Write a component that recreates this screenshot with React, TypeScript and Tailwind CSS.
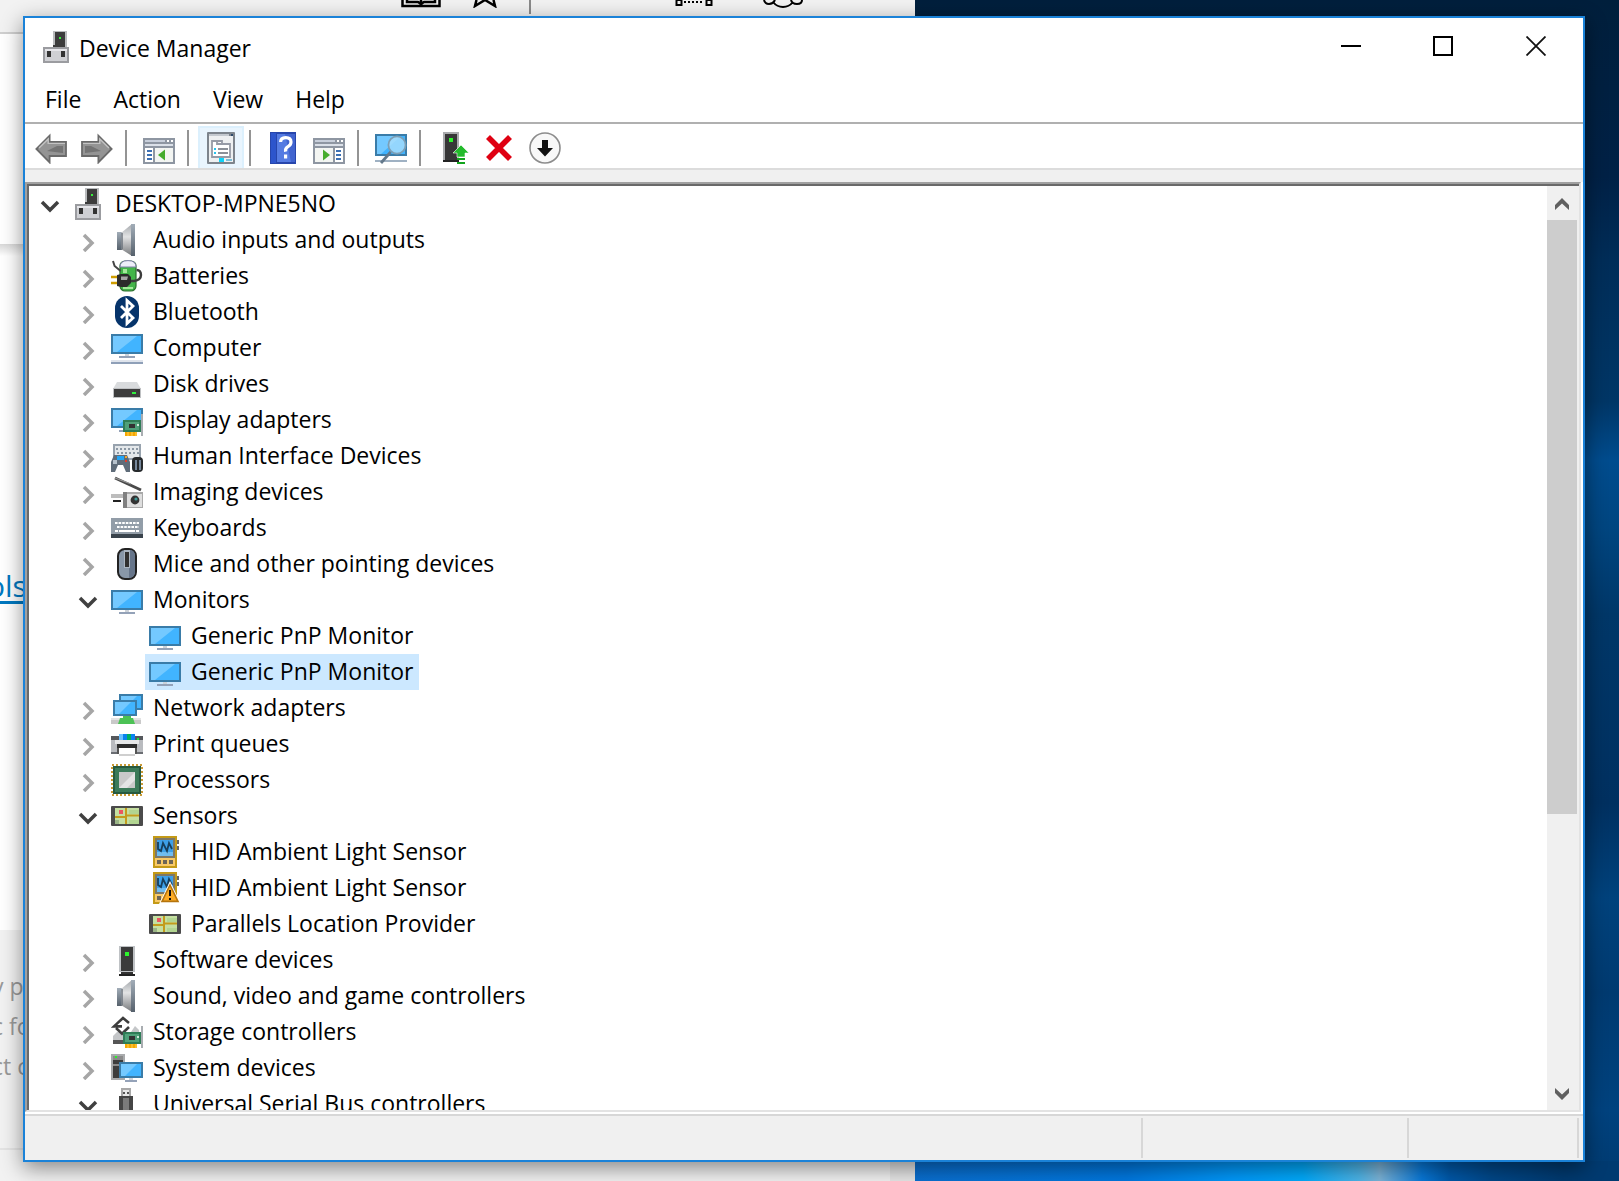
import React, { useState } from 'react';

type IconProps = { children: React.ReactNode };

const Icon: React.FC<IconProps> = ({ children }) => (
  <svg viewBox="0 0 16 16" className="w-8 h-8 shrink-0" aria-hidden="true">
    {children}
  </svg>
);

type ScreenProps = { x: number; y: number; w: number; h: number };

const Screen: React.FC<ScreenProps> = ({ x, y, w, h }) => (
  <>
    <rect x={x} y={y} width={w} height={h} fill="#3a7ca8" />
    <rect x={x + 1} y={y + 1} width={w - 2} height={h - 2} fill="#41b4ff" />
    <path d={`M${x + 1} ${y + 1}h${w - 4}l${-(w - 6)} ${h - 2}h-2z`} fill="#74c9ff" />
  </>
);

const GreenCard = () => (
  <>
    <rect x="15" y="5" width="1" height="11" fill="#a9adb1" />
    <rect x="6" y="8" width="9" height="6" fill="#2f7d57" />
    <rect x="7" y="9" width="7" height="4" fill="#4fa079" />
    <rect x="9" y="10" width="3" height="2" fill="#333" />
    <rect x="13" y="10" width="1" height="1" fill="#cfe8da" />
    <rect x="7" y="14" width="6" height="2" fill="#f5a800" />
    <path d="M8.5 14v2M10.5 14v2M12.5 14v2" stroke="#ffd25c" strokeWidth="0.5" />
  </>
);

const PcIcon = () => (
  <Icon>
    <path d="M6 0h7v8H6z" fill="#b9bbbd" />
    <path d="M7 .5h5V8H6V7h1z" fill="#3c3c3c" />
    <rect x="9" y="3" width="1" height="1" fill="#36f03a" />
    <rect x="1" y="8" width="13" height="8" fill="#9b9ca0" />
    <rect x="2" y="9" width="11" height="6" fill="#cfd0d4" />
    <rect x="2" y="9" width="11" height="1" fill="#e6e6ea" />
    <rect x="3" y="10" width="2" height="3" fill="#333" />
    <rect x="10" y="10" width="2" height="3" fill="#333" />
  </Icon>
);

const SpeakerIcon = () => (
  <Icon>
    <defs>
      <linearGradient id="cone" x1="0" x2="0" y1="0" y2="1">
        <stop offset="0" stopColor="#a4a8ac" />
        <stop offset="0.4" stopColor="#e2e3e4" />
        <stop offset="1" stopColor="#77797c" />
      </linearGradient>
      <linearGradient id="rim" x1="0" x2="0" y1="0" y2="1">
        <stop offset="0" stopColor="#a2adb8" />
        <stop offset="1" stopColor="#56616c" />
      </linearGradient>
    </defs>
    <rect x="3" y="4" width="3" height="9" fill="url(#rim)" />
    <path d="M5 4.500L10.500 0v16L5 12.500z" fill="url(#cone)" />
    <path d="M5.500 4.500v8" stroke="#656e78" strokeWidth="0.700" />
    <rect x="10" y="0" width="2" height="16" fill="url(#rim)" />
  </Icon>
);

const BatteryIcon = () => (
  <Icon>
    <rect x="4.500" y="0.500" width="8" height="15" rx="2.500" fill="#43b549" stroke="#2b6e2d" strokeWidth="0.6" />
    <path d="M4.500 3.500Q4.500.3 8.500.3t4 3.200z" fill="#eeeef8" stroke="#8080a8" strokeWidth="0.5" />
    <path d="M6 4.500h2v2H6zM6 13.500h5v1H6z" fill="#a5e89c" />
    <path d="M1 .5l.8 2.500 3 2.500" fill="none" stroke="#444" strokeWidth="1" />
    <path d="M9.500 10.500h2q3.500-.5 3.500-3T12.800 5" fill="none" stroke="#3c3c3c" strokeWidth="1.200" />
    <path d="M0 8.500h3M0 11.500h3" stroke="#cf9d00" strokeWidth="1.200" />
    <path d="M3 7.500L5 7h3.500L10 8.500v3L8 13.500H5L3 13z" fill="#2b2b2b" />
    <path d="M5 8.200h3.500L8 10H5z" fill="#a5a5a5" />
  </Icon>
);

const BluetoothIcon = () => (
  <Icon>
    <rect x="2" y="0" width="12" height="16" rx="6" fill="#06346b" />
    <path d="M5 5l6 6-3 2.800V2.200L11 5l-6 6" fill="none" stroke="#fff" strokeWidth="1.400" />
  </Icon>
);

const ComputerIcon = () => (
  <Icon>
    <Screen x={0} y={1} w={16} h={10} />
    <rect x="7" y="11" width="2" height="1" fill="#cdd3da" />
    <rect x="4" y="12" width="8" height="1" fill="#94a2b8" />
    <rect x="0" y="14" width="16" height="1" fill="#dfe4ec" />
    <rect x="0" y="15" width="16" height="1" fill="#8fa0b8" />
  </Icon>
);

const DiskIcon = () => (
  <Icon>
    <path d="M3 7h10l2 3.500H1z" fill="#d9dbdd" />
    <rect x="1" y="10" width="14" height="5" fill="#bfc1c3" />
    <rect x="1.500" y="10.500" width="13" height="4" fill="#3d3d3d" />
    <rect x="10.500" y="12" width="2" height="1" fill="#30f040" />
  </Icon>
);

const DisplayIcon = () => (
  <Icon>
    <Screen x={0} y={2} w={16} h={10} />
    <rect x="4" y="13" width="4" height="1" fill="#94a2b8" />
    <GreenCard />
  </Icon>
);

const HidIcon = () => (
  <Icon>
    <rect x="1" y="2" width="14" height="8" fill="#98a3ae" />
    <rect x="2" y="3" width="12" height="6" fill="#e3e7ea" />
    <path d="M2.500 4.500h11M3 6.500h11" stroke="#8c98a4" strokeWidth="1" strokeDasharray="1 1" />
    <path d="M0 16v-5l1.500-3.500h6.500l1.500 3.500v5H7.500L6 12.500H3.500L2 16z" fill="#5f6c79" />
    <path d="M3 8h3.500v2H3z" fill="#23a4f5" />
    <rect x="7" y="8" width="1" height="1" fill="#f5a62a" />
    <rect x="7" y="10" width="1" height="1" fill="#e33c2c" />
    <rect x="1" y="10" width="2" height="2" fill="#b7c2cc" />
    <rect x="10.500" y="8.500" width="5.500" height="7.500" rx="2" fill="#26292c" />
    <path d="M12 10h1v5h-1zM14 10h1v5h-1z" fill="#76879b" />
  </Icon>
);

const CameraIcon = () => (
  <Icon>
    <path d="M2 1l13 6" stroke="#4a4a4a" strokeWidth="1.500" />
    <path d="M2 1l8 3" stroke="#999" strokeWidth="0.6" />
    <rect x="0" y="9" width="6" height="2" fill="#bdbdbd" />
    <rect x="1" y="12" width="4" height="1" fill="#222" />
    <rect x="6" y="8" width="10" height="8" fill="#a9a9a9" />
    <rect x="8" y="9" width="7.500" height="6.500" fill="#dedede" />
    <rect x="6" y="8" width="2" height="8" fill="#808080" />
    <circle cx="12" cy="12" r="2.200" fill="#333" />
    <circle cx="12.500" cy="11.500" r="0.800" fill="#3f9a98" />
  </Icon>
);

const KeyboardIcon = () => (
  <Icon>
    <rect x="0" y="3" width="16" height="8" fill="#929da8" />
    <path d="M2 5.500h12M3 7.500h11" stroke="#fff" strokeWidth="1" strokeDasharray="1.300 .5" />
    <path d="M2 9.500h1.500M4 9.500h8M12.500 9.500H14" stroke="#fff" strokeWidth="1" />
    <rect x="0" y="11" width="16" height="2" fill="#39434c" />
  </Icon>
);

const MouseIcon = () => (
  <Icon>
    <rect x="3.500" y="0.500" width="9" height="15" rx="3.500" fill="#8897a8" stroke="#222" strokeWidth="1" />
    <path d="M9 1h1q2 .5 2 3v8q0 2.500-3 3z" fill="#66758a" />
    <path d="M8 1v9" stroke="#aab5c1" strokeWidth="3" />
    <rect x="7" y="2" width="2" height="7.500" fill="#303030" />
  </Icon>
);

const MonitorIcon = () => (
  <Icon>
    <Screen x={0} y={3} w={16} h={10} />
    <rect x="7" y="13" width="2" height="1" fill="#cdd3da" />
    <rect x="4" y="14" width="8" height="1" fill="#94a2b8" />
  </Icon>
);

const NetworkIcon = () => (
  <Icon>
    <Screen x={4} y={1} w={12} h={8} />
    <Screen x={1} y={4} w={12} h={8} />
    <rect x="0" y="13" width="15" height="3" fill="#c9c9c9" />
    <rect x="0" y="13" width="15" height="1" fill="#e4e4e4" />
    <path d="M6 12h4v1h1l1 3H3.500l1-3H6z" fill="#4cc255" />
  </Icon>
);

const PrinterIcon = () => (
  <Icon>
    <rect x="0" y="4" width="16" height="3" fill="#55585c" />
    <rect x="0" y="6" width="16" height="7" fill="#b9bbbf" />
    <rect x="0" y="12" width="16" height="1" fill="#6a6d72" />
    <rect x="4" y="3" width="8" height="3" fill="#0b83f0" />
    <rect x="4" y="3" width="2" height="3" fill="#6cc0ff" />
    <rect x="8" y="3" width="2" height="3" fill="#00b062" />
    <rect x="13" y="5" width="1" height="1" fill="#1fe03b" />
    <rect x="2" y="6" width="12" height="2" fill="#e6e7e8" />
    <rect x="3" y="8" width="10" height="2" fill="#2d2d2d" />
    <rect x="3" y="10" width="1" height="3" fill="#555" />
    <rect x="12" y="10" width="1" height="3" fill="#555" />
    <rect x="4" y="10" width="8" height="4" fill="#fff" />
    <rect x="4" y="13" width="8" height="1" fill="#cfcfcf" />
  </Icon>
);

const CpuIcon = () => (
  <Icon>
    <rect x="0.500" y="0.500" width="15" height="15" fill="none" stroke="#c99a35" strokeWidth="1" strokeDasharray="1 1" />
    <rect x="1" y="1" width="14" height="14" fill="#275a40" />
    <rect x="2" y="2" width="12" height="12" fill="#3b7a58" />
    <rect x="4" y="4" width="8" height="8" fill="#c9c9c9" />
    <path d="M4 12L12 4v4l-4 4z" fill="#e4e4e4" />
  </Icon>
);

const MapIcon = () => (
  <Icon>
    <rect x="0" y="3" width="16" height="10" rx="0.500" fill="#4b4b4b" />
    <rect x="2" y="4" width="12" height="8" fill="#c5dfa0" />
    <path d="M9 5h5v2H9zM9 10h5v2H9z" fill="#b2d591" />
    <path d="M2 8.500h5l1-.8h6M7.500 4v8" fill="none" stroke="#c39c1c" strokeWidth="1" />
    <rect x="4" y="5" width="2" height="2" fill="#ec5560" />
    <rect x="2" y="10" width="2" height="2" fill="#9bb587" />
  </Icon>
);

const SensorIcon: React.FC<{ warning?: boolean }> = ({ warning }) => (
  <Icon>
    <rect x="2" y="0" width="12" height="16" fill="#c49a17" />
    <rect x="3" y="1" width="10" height="10" fill="#7c7868" />
    <rect x="4" y="2" width="8" height="8" fill="#3da0e8" />
    <rect x="4" y="8" width="8" height="2" fill="#70bdf0" />
    <path d="M4.500 3v3.500L6 7.500l1-4 2 4 1-4 1.500 3" fill="none" stroke="#173f5c" strokeWidth="0.900" />
    <rect x="3" y="11" width="10" height="4" fill="#f8c967" />
    <path d="M4 12h2v2H4zM7 12h2v2H7zM10 12h2v2h-2z" fill="#6d6656" />
    <path d="M14 2h1v2h-1zM14 5h1v2h-1z" fill="#666" />
    {warning && (
      <>
        <path d="M10.500 4.500L16 16H5z" fill="#fff" />
        <path d="M10.500 6.500l4 8.200h-8z" fill="#fbab25" stroke="#b5740c" strokeWidth="0.800" />
        <path d="M10.500 9v3M10.500 13v1" stroke="#111" strokeWidth="1" />
      </>
    )}
  </Icon>
);

const TowerIcon = () => (
  <Icon>
    <rect x="4" y="1" width="8" height="13" fill="#bfc2c5" />
    <rect x="5" y="1.500" width="6" height="12" fill="#3b3b3b" />
    <rect x="7" y="4" width="2" height="2" fill="#2cf42c" />
    <rect x="5" y="14" width="6" height="1" fill="#333" />
    <rect x="4" y="15" width="8" height="1" fill="#222" />
  </Icon>
);

const StorageIcon = () => (
  <Icon>
    <path d="M1 10l2-2h7l2-3 2 2v7H1z" fill="#c4c6c8" />
    <rect x="1" y="12" width="6" height="2" fill="#555" />
    <path d="M9 3.500L6 1 1.500 5.200h4M2.500 6l3 2.800L9 5.500" fill="none" stroke="#3d3d3d" strokeWidth="1.300" />
    <GreenCard />
  </Icon>
);

const SystemIcon = () => (
  <Icon>
    <rect x="0" y="1" width="7" height="13" fill="#a9abad" />
    <rect x="1" y="2" width="5" height="11" fill="#3d3d3d" />
    <path d="M1 2h5v2H1zM1 6h3v1H1z" fill="#8b8b8b" />
    <rect x="2" y="2" width="1" height="1" fill="#2cf42c" />
    <Screen x={4} y={5} w={12} h={8} />
    <rect x="9" y="13" width="2" height="1" fill="#cdd3da" />
    <rect x="7" y="14" width="6" height="1" fill="#94a2b8" />
  </Icon>
);

const UsbIcon = () => (
  <Icon>
    <rect x="5" y="0" width="5" height="4" fill="#a8a8a8" />
    <rect x="6" y="1" width="3" height="3" fill="#e8e8e8" />
    <path d="M6 2h1v1H6zM8 2h1v1H8z" fill="#555" />
    <path d="M4 4h7v9l-2 2H6l-2-2z" fill="#454545" />
    <rect x="6" y="5" width="3" height="6" fill="#7b7b7b" />
  </Icon>
);

const ArrowIcon: React.FC<{ flip?: boolean }> = ({ flip }) => (
  <Icon>
    <g transform={flip ? 'matrix(-1 0 0 1 16 0)' : undefined}>
      <path d="M.7 8.500L7.300 1.800V5h8.200v7H7.300v3.200z" fill="#949494" stroke="#6a6a6a" strokeWidth="0.900" />
      <path d="M2 8l4.600-4.500v2.200H15" fill="none" stroke="#c3c3c3" strokeWidth="0.700" />
      <path d="M6 9.500l5-2.500h3v3.500z" fill="#747474" />
    </g>
  </Icon>
);

const PaneIcon: React.FC<{ flip?: boolean }> = ({ flip }) => (
  <Icon>
    <rect x="0" y="3" width="16" height="13" fill="#8e96a2" />
    <rect x="1" y="4" width="10" height="1" fill="#c8cfdb" />
    <path d="M12 4h1v1h-1zM14 4h1v1h-1z" fill="#fff" />
    <rect x="1" y="6" width="14" height="1" fill="#dbe0e8" />
    <g transform={flip ? 'matrix(-1 0 0 1 16 0)' : undefined}>
      <rect x="1" y="8" width="4" height="7" fill="#fff" />
      <rect x="6" y="8" width="9" height="7" fill="#f3f5f2" />
      <path d="M2 9.500h2.500M2 11.500h2.500M2 13.500h2.500" stroke="#3c70b4" strokeWidth="1" />
      <path d="M11 8.700v5.600L7.500 11.500z" fill="#46ac2d" />
    </g>
  </Icon>
);

const PropertiesIcon = () => (
  <Icon>
    <rect x="1" y="0" width="14" height="16" rx="0.500" fill="#7d848c" />
    <rect x="2" y="2" width="12" height="13" fill="#eef0f1" />
    <rect x="2" y="1" width="10" height="1" fill="#c4c9cf" />
    <rect x="13" y="1" width="1" height="1" fill="#2d4a6c" />
    <path d="M3.500 4.500h5v1.500h4v6.500h-9zM6 4.500V6h2.500" fill="#fff" stroke="#969ba6" strokeWidth="0.900" />
    <path d="M4.500 8.500h1M4.500 10.500h1" stroke="#27c4ee" strokeWidth="1" />
    <path d="M6.500 8.500h5M6.500 10.500h5" stroke="#8b9098" strokeWidth="0.900" />
    <path d="M7 13h2.500v2H7z" fill="#0fd3f8" />
    <path d="M10.500 14h3" stroke="#7bbdd8" strokeWidth="1" />
  </Icon>
);

const HelpIcon = () => (
  <Icon>
    <rect x="1.500" y="0" width="13" height="16" fill="#2746ac" />
    <rect x="2" y="0.500" width="2.500" height="15" fill="#2d55cc" />
    <rect x="5" y="1" width="9" height="14" fill="#557be2" />
    <path d="M9 1h5v14h-2z" fill="#4164cf" />
    <path d="M6.800 5q0-2.200 2.600-2.200T12 5q0 1.500-1.500 2.300t-1.200 2.500M9.300 11.200v2" fill="none" stroke="#fff" strokeWidth="1.600" />
  </Icon>
);

const ScanIcon = () => (
  <Icon>
    <Screen x={0} y={1} w={16} h={11} />
    <rect x="0" y="14" width="16" height="1" fill="#9fb1c3" />
    <circle cx="11" cy="6.500" r="4.300" fill="#a9defc" fillOpacity="0.800" stroke="#7c9fb6" strokeWidth="0.900" />
    <path d="M7.800 10L3 15.500" stroke="#64798b" strokeWidth="1.400" />
  </Icon>
);

const UpdateIcon = () => (
  <Icon>
    <rect x="3" y="0" width="8" height="14" fill="#a9abad" />
    <rect x="4" y="1" width="6" height="13" fill="#373737" />
    <rect x="6" y="3" width="2" height="2" fill="#2cf42c" />
    <rect x="3" y="14" width="8" height="1" fill="#222" />
    <path d="M12 6.500l4 4h-2v2h-4v-2H8z" fill="#23bb2c" stroke="#fff" strokeWidth="0.300" />
    <path d="M10 13.500h4M10 15.500h4" stroke="#12a41d" strokeWidth="1" />
  </Icon>
);

const UninstallIcon = () => (
  <Icon>
    <path d="M2.500 2.500l11 11M13.500 2.500l-11 11" stroke="#df0012" strokeWidth="2.800" />
  </Icon>
);

const DisableIcon = () => (
  <Icon>
    <circle cx="8" cy="8" r="7.500" fill="#f8f8f8" stroke="#8c8c8c" strokeWidth="0.800" />
    <path d="M6.500 4h3v4h2.500l-4 4.300L4 8h2.500z" fill="#111" />
  </Icon>
);

type Row = {
  label: string;
  icon: React.FC;
  level: number;
  state?: 'open' | 'closed';
};

const WarningSensorIcon = () => <SensorIcon warning />;

const rows: Row[] = [
  { label: 'DESKTOP-MPNE5NO', icon: PcIcon, level: 0, state: 'open' },
  { label: 'Audio inputs and outputs', icon: SpeakerIcon, level: 1, state: 'closed' },
  { label: 'Batteries', icon: BatteryIcon, level: 1, state: 'closed' },
  { label: 'Bluetooth', icon: BluetoothIcon, level: 1, state: 'closed' },
  { label: 'Computer', icon: ComputerIcon, level: 1, state: 'closed' },
  { label: 'Disk drives', icon: DiskIcon, level: 1, state: 'closed' },
  { label: 'Display adapters', icon: DisplayIcon, level: 1, state: 'closed' },
  { label: 'Human Interface Devices', icon: HidIcon, level: 1, state: 'closed' },
  { label: 'Imaging devices', icon: CameraIcon, level: 1, state: 'closed' },
  { label: 'Keyboards', icon: KeyboardIcon, level: 1, state: 'closed' },
  { label: 'Mice and other pointing devices', icon: MouseIcon, level: 1, state: 'closed' },
  { label: 'Monitors', icon: MonitorIcon, level: 1, state: 'open' },
  { label: 'Generic PnP Monitor', icon: MonitorIcon, level: 2 },
  { label: 'Generic PnP Monitor', icon: MonitorIcon, level: 2 },
  { label: 'Network adapters', icon: NetworkIcon, level: 1, state: 'closed' },
  { label: 'Print queues', icon: PrinterIcon, level: 1, state: 'closed' },
  { label: 'Processors', icon: CpuIcon, level: 1, state: 'closed' },
  { label: 'Sensors', icon: MapIcon, level: 1, state: 'open' },
  { label: 'HID Ambient Light Sensor', icon: SensorIcon, level: 2 },
  { label: 'HID Ambient Light Sensor', icon: WarningSensorIcon, level: 2 },
  { label: 'Parallels Location Provider', icon: MapIcon, level: 2 },
  { label: 'Software devices', icon: TowerIcon, level: 1, state: 'closed' },
  { label: 'Sound, video and game controllers', icon: SpeakerIcon, level: 1, state: 'closed' },
  { label: 'Storage controllers', icon: StorageIcon, level: 1, state: 'closed' },
  { label: 'System devices', icon: SystemIcon, level: 1, state: 'closed' },
  { label: 'Universal Serial Bus controllers', icon: UsbIcon, level: 1, state: 'open' },
];

const indents = ['pl-[6px]', 'pl-[44px]', 'pl-[82px]'];

const toolGroups: { label: string; icon: React.ReactNode; active?: boolean }[][] = [
  [
    { label: 'Back', icon: <ArrowIcon /> },
    { label: 'Forward', icon: <ArrowIcon flip /> },
  ],
  [{ label: 'Show/Hide Console Tree', icon: <PaneIcon /> }],
  [{ label: 'Properties', icon: <PropertiesIcon />, active: true }],
  [
    { label: 'Help', icon: <HelpIcon /> },
    { label: 'Show/Hide Action Pane', icon: <PaneIcon flip /> },
  ],
  [{ label: 'Scan for hardware changes', icon: <ScanIcon /> }],
  [
    { label: 'Update driver', icon: <UpdateIcon /> },
    { label: 'Uninstall', icon: <UninstallIcon /> },
    { label: 'Disable', icon: <DisableIcon /> },
  ],
];

const Expander: React.FC<{ state?: 'open' | 'closed' }> = ({ state }) => {
  if (!state) return <span className="w-[30px] mr-1 shrink-0" />;
  return (
    <button aria-label={state === 'open' ? 'Collapse' : 'Expand'} className="w-[30px] h-9 pt-1 mr-1 shrink-0 flex items-center justify-center">
      <svg viewBox="0 0 20 20" className="w-5 h-5">
        {state === 'open' ? (
          <path d="M2 6l8 8 8-8" fill="none" stroke="#404040" strokeWidth="3.500" />
        ) : (
          <path d="M6 3l8 8-8 8" fill="none" stroke="#a6a6a6" strokeWidth="3.500" />
        )}
      </svg>
    </button>
  );
};

const DeviceTree: React.FC = () => {
  const [selected, setSelected] = useState(13);

  return (
    <ul role="tree" className="flex-1 min-w-0 overflow-hidden bg-white">
      {rows.map((row, i) => (
        <li key={i} role="treeitem" aria-selected={i === selected} className={`flex items-center h-9 ${indents[row.level]}`}>
          <Expander state={row.state} />
          <button
            onClick={() => setSelected(i)}
            className={`flex items-center gap-[10px] h-9 pl-1 pr-[6px] text-[23px] leading-8 whitespace-nowrap ${i === selected ? 'bg-[#cce8ff]' : ''}`}
          >
            <row.icon />
            <span className="pb-[2px]">{row.label}</span>
          </button>
        </li>
      ))}
    </ul>
  );
};

const ScrollBar: React.FC = () => (
  <div className="w-8 shrink-0 flex flex-col bg-[#f0f0f0]">
    <button aria-label="Scroll up" className="h-[34px] w-[30px] pt-[2px] flex items-center justify-center">
      <svg viewBox="0 0 14 12" className="w-[14px] h-3">
        <path d="M0 12V7l7-7 7 7v5L7 5.500z" fill="#606060" />
      </svg>
    </button>
    <div className="w-[30px] flex-[594] bg-[#cdcdcd]" />
    <div className="flex-[262]" />
    <button aria-label="Scroll down" className="h-[34px] w-[30px] pt-[2px] flex items-center justify-center">
      <svg viewBox="0 0 14 12" className="w-[14px] h-3">
        <path d="M0 0v5l7 7 7-7V0L7 6.500z" fill="#606060" />
      </svg>
    </button>
  </div>
);

const BrowserWindow: React.FC = () => (
  <div className="absolute inset-y-0 left-0 w-[915px] flex flex-col overflow-hidden bg-white">
    <div className="h-[34px] shrink-0 flex items-start pl-[401px] bg-[#f2f2f2] border-b-2 border-[#cfcfcf]">
      <svg viewBox="0 0 40 8" className="w-10 h-2">
        <path d="M1.500 0v6h37V0M6 0v2h11l3 2 3-2h11V0M20 0v4" fill="none" stroke="#000" strokeWidth="2.500" />
      </svg>
      <svg viewBox="0 0 24 8" className="w-6 h-2 ml-8">
        <path d="M3.500 0L2 6l10-6 10 6-1.500-6" fill="none" stroke="#000" strokeWidth="2.500" />
      </svg>
      <div className="w-[2px] h-[14px] ml-8 bg-[#8a8a8a]" />
      <svg viewBox="0 0 38 8" className="w-[38px] h-2 ml-36">
        <path d="M1.500 0h5v5h-5zM31.500 0h5v5h-5z" fill="none" stroke="#000" strokeWidth="2" />
        <path d="M9 2h20" stroke="#000" strokeWidth="2" strokeDasharray="2 2" />
      </svg>
      <svg viewBox="0 0 40 8" className="w-10 h-2 ml-[50px]">
        <path d="M1 0q1 4 5 4t6-4M28 0q1 4 6 4t5-4M10 2q4 5 10 5t10-5" fill="none" stroke="#000" strokeWidth="2" />
      </svg>
    </div>
    <div className="h-[210px] shrink-0" />
    <div className="h-3 shrink-0 bg-linear-to-b from-[#d8d8d8] to-white" />
    <div className="flex-1 flex flex-col justify-center pb-[14px]">
      <a href="#tools" className="-ml-[13px] text-[30px] leading-10 text-[#0078c0] underline underline-offset-4">
        ols
      </a>
    </div>
    <div className="h-[251px] shrink-0 pt-9 bg-[#f2f2f2] text-[23px] leading-10 text-[#999] whitespace-nowrap">
      <p className="-ml-2">y p</p>
      <p className="-ml-2">c fo</p>
      <p className="-ml-2">ct c</p>
      <div className="mt-[62px] border-t-2 border-[#e4e4e4]" />
      <div className="h-8 w-[25px] ml-auto bg-[#e6e6e6]" />
    </div>
  </div>
);

const TitleBar: React.FC = () => (
  <header className="h-[60px] shrink-0 flex items-start justify-between">
    <div className="flex items-center gap-[6px] h-[58px] pl-4">
      <PcIcon />
      <h1 className="text-[23px] leading-8 pt-[2px]">Device Manager</h1>
    </div>
    <div className="flex h-14">
      <button aria-label="Minimize" className="w-[92px] flex items-center justify-center">
        <span className="w-5 h-[2px] bg-black" />
      </button>
      <button aria-label="Maximize" className="w-[92px] flex items-center justify-center">
        <span className="w-5 h-5 border-2 border-black" />
      </button>
      <button aria-label="Close" className="w-[94px] flex items-center justify-center">
        <svg viewBox="0 0 20 20" className="w-5 h-5">
          <path d="M.5.5l19 19M19.500.5l-19 19" stroke="#111" strokeWidth="1.800" />
        </svg>
      </button>
    </div>
  </header>
);

const Toolbar: React.FC = () => (
  <div role="toolbar" className="h-[46px] shrink-0 flex items-end pl-[3px] border-b-2 border-[#dcdcdc]">
    {toolGroups.map((group, i) => (
      <React.Fragment key={i}>
        {i > 0 && <span className="w-[2px] h-9 ml-[5px] mr-[9px] mb-[2px] bg-[#949494]" />}
        {group.map((tool) => (
          <button
            key={tool.label}
            aria-label={tool.label}
            className={`w-[46px] h-[42px] flex items-center justify-center ${tool.active ? 'bg-[#e9f5fe] border-x-2 border-t-2 border-[#dcf0fd]' : 'pt-[2px]'}`}
          >
            {tool.icon}
          </button>
        ))}
      </React.Fragment>
    ))}
  </div>
);

export default function App() {
  return (
    <div className="relative h-screen flex overflow-hidden pt-4 pl-[23px] pr-[34px] pb-[19px] bg-[#002548] font-['Open_Sans','Noto_Sans',sans-serif] text-black">
      <div className="absolute inset-y-0 right-0 w-[704px] bg-[linear-gradient(180deg,#001f3c_0%,#002146_15%,#002d58_22%,#003666_34%,#004c8e_39%,#00457f_45%,#003768_52%,#003060_68%,#00427c_76%,#003a70_84%,#00427e_94%,#003a70_100%)]" />
      <div className="absolute bottom-0 right-0 w-[704px] h-5 bg-[linear-gradient(90deg,#0a6fd0_0%,#0078e0_30%,#0098fa_45%,#00aafc_55%,#4cb4e8_63%,#7cb4d8_66%,#0878d8_72%,#0058a8_76%,#004788_82%,#003a70_92%)]" />
      <BrowserWindow />
      <main className="relative flex-1 min-w-0 flex flex-col bg-white border-2 border-[#1a82d8] shadow-[0_6px_20px_rgba(0,0,0,0.45)]">
        <TitleBar />
        <nav className="h-[46px] shrink-0 flex items-center pl-1 pb-[2px] border-b-2 border-[#b0b0b0] text-[23px] leading-8">
          {['File', 'Action', 'View', 'Help'].map((item) => (
            <button key={item} className="px-4">
              {item}
            </button>
          ))}
        </nav>
        <Toolbar />
        <div className="h-3 shrink-0 bg-[#f0f0f0]" />
        <section className="flex-1 min-h-0 flex mr-[2px] mb-[2px] border-2 border-t-[#a0a0a0] border-l-[#a0a0a0] border-r-[#e3e3e3] border-b-[#e3e3e3]">
          <div className="flex-1 min-w-0 flex border-t-2 border-l-2 border-[#696969]">
            <DeviceTree />
            <ScrollBar />
          </div>
        </section>
        <footer className="h-[46px] shrink-0 flex justify-end py-[2px] pr-1 border-t-2 border-[#d7d7d7] bg-[#f0f0f0]">
          <span className="w-[266px] border-l-2 border-[#d7d7d7]" />
          <span className="w-[172px] border-x-2 border-[#d7d7d7]" />
        </footer>
      </main>
    </div>
  );
}
